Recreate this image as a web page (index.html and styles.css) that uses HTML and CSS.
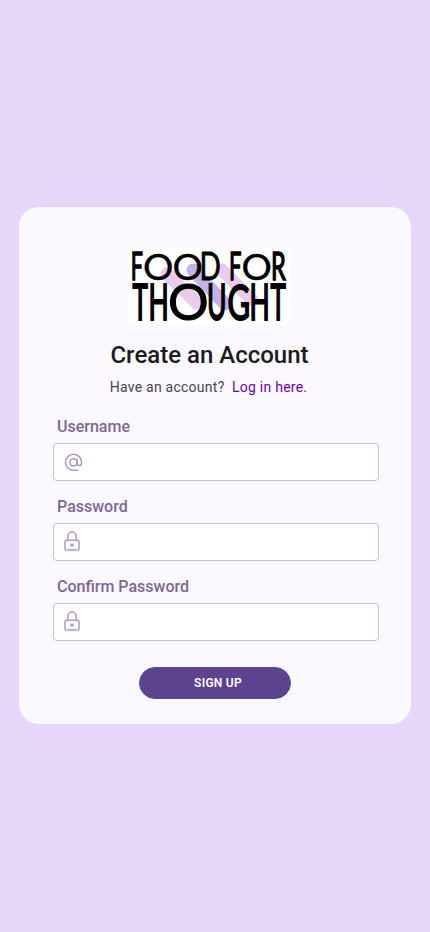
FILE: index.html
```html
<!DOCTYPE html>
<html lang="en">
<head>
<meta charset="utf-8">
<meta name="viewport" content="width=device-width, initial-scale=1">
<title>Create an Account</title>
<link rel="stylesheet" href="styles.css">
</head>
<body>
<main class="card">
  <svg class="logo" viewBox="0 0 162 77" role="img" aria-label="Food for Thought">
    <g class="band">
      <path class="pink" d="M39 26 69 55"/>
      <path class="pink" d="M94 22 124 52"/>
      <path class="violet" d="M65 22 97 56"/>
    </g>
    <g class="row-top">
      <text class="stem" transform="matrix(.215 0 0 .38 2.7 32.2)">F</text>
      <text class="ring" transform="matrix(.38 0 0 .374 14.9 32)">O</text>
      <text class="ring" transform="matrix(.38 0 0 .374 44.6 32)">O</text>
      <text class="heavy" transform="matrix(.28 0 0 .38 71.5 32.2)">D</text>
      <text class="stem" transform="matrix(.22 0 0 .38 101.1 32.2)">F</text>
      <text class="ring" transform="matrix(.38 0 0 .374 113.6 32)">O</text>
      <text class="stem" transform="matrix(.235 0 0 .38 143 32.2)">R</text>
    </g>
    <g class="row-bottom">
      <text class="stem" transform="matrix(.26 0 0 .5 4.5 71.7)">T</text>
      <text class="stem" transform="matrix(.265 0 0 .5 20.4 71.7)">H</text>
      <text class="heavy" transform="matrix(.508 0 0 .5 40 71.8)">O</text>
      <text class="stem" transform="matrix(.265 0 0 .5 79.1 71.5)">U</text>
      <text class="stem" transform="matrix(.31 0 0 .49 99.6 71.5)">G</text>
      <text class="stem" transform="matrix(.265 0 0 .5 121.4 71.7)">H</text>
      <text class="stem" transform="matrix(.26 0 0 .5 142.5 71.7)">T</text>
    </g>
  </svg>
  <h1 class="title">Create an Account</h1>
  <p class="switch">Have an account?&nbsp; <a class="link" href="#">Log in here.</a></p>
  <form class="form">
    <div class="field">
      <label class="label" for="username">Username</label>
      <div class="control">
        <svg class="icon" viewBox="0 0 20 20" aria-hidden="true">
          <circle cx="10.5" cy="10.3" r="3.6"/>
          <path d="M14.1 7.2v4.2a2.2 2.2 0 0 0 4.4 0v-1.1a8 8 0 1 0-8 8h4"/>
        </svg>
        <input class="input" id="username" type="text">
      </div>
    </div>
    <div class="field">
      <label class="label" for="password">Password</label>
      <div class="control">
        <svg class="icon lock" viewBox="0 0 20 20" aria-hidden="true">
          <rect x="2" y="9.2" width="14" height="9.8" rx="2"/>
          <path d="M4.9 9.2V5.1a4.1 4.1 0 0 1 8.2 0v4.1"/>
          <circle class="dot" cx="9" cy="14" r="1.8"/>
        </svg>
        <input class="input" id="password" type="password">
      </div>
    </div>
    <div class="field">
      <label class="label" for="confirm">Confirm Password</label>
      <div class="control">
        <svg class="icon lock" viewBox="0 0 20 20" aria-hidden="true">
          <rect x="2" y="9.2" width="14" height="9.8" rx="2"/>
          <path d="M4.9 9.2V5.1a4.1 4.1 0 0 1 8.2 0v4.1"/>
          <circle class="dot" cx="9" cy="14" r="1.8"/>
        </svg>
        <input class="input" id="confirm" type="password">
      </div>
    </div>
    <button class="submit" type="button">SIGN UP</button>
  </form>
</main>
</body>
</html>
```
FILE: styles.css
```css
* { box-sizing: border-box; }
body {
  margin: 0;
  min-height: 100vh;
  padding: 207px 19px 0;
  background: #e6d7fa;
  font-family: Roboto, sans-serif;
}
.card {
  display: flex;
  flex-direction: column;
  align-items: center;
  height: 517px;
  padding: 41px 32px 0 34px;
  border-radius: 20px;
  background: #fbf8ff;
}
.logo {
  display: block;
  width: 162px;
  height: 77px;
  margin-right: 14px;
  border-radius: 5px;
  background: #fff;
  overflow: visible;
}
.logo text {
  font: 400 100px Lato, sans-serif;
  fill: #000;
  stroke: #000;
  stroke-width: 0;
}
.logo .ring { stroke-width: 1px; }
.logo .heavy { stroke-width: 2px; }
.logo .stem { stroke-width: 4px; }
.band { fill: none; stroke-width: 13px; stroke-linecap: round; }
.pink { stroke: #ebcbea; }
.violet { stroke: #c3b1ea; }
.title {
  margin: 16px 0 0;
  padding-right: 13px;
  color: #1d1b20;
  font-size: 24px;
  font-weight: 500;
  line-height: 28px;
}
.switch {
  margin: 8px 0 18px;
  padding-right: 15px;
  color: #49454f;
  font-size: 14px;
  line-height: 20px;
  letter-spacing: .25px;
}
.link { color: #6a00c4; text-decoration: none; }
.form {
  display: flex;
  flex-direction: column;
  gap: 14px;
  width: 100%;
}
.label {
  display: block;
  margin-bottom: 4px;
  padding-left: 4px;
  color: #7d6797;
  font-size: 16px;
  font-weight: 500;
  line-height: 24px;
}
.control {
  display: flex;
  align-items: center;
  height: 38px;
  padding-left: 9px;
  border: 1px solid #c8c4cc;
  border-radius: 4px;
  background: #fff;
}
.icon {
  flex: none;
  width: 20px;
  height: 20px;
  fill: none;
  stroke: #ac98cc;
  stroke-width: 1.5px;
  stroke-linecap: round;
}
.lock { margin-bottom: 2px; }
.icon .dot { fill: #ac98cc; stroke: none; }
.input {
  flex: 1;
  min-width: 0;
  height: 100%;
  padding: 0 8px;
  border: 0;
  outline: 0;
  background: none;
  font: inherit;
}
.submit {
  align-self: center;
  width: 152.5px;
  height: 32px;
  margin: 12px 2px 0 0;
  padding: 0 0 0 6px;
  border: 1px solid #4650bc;
  border-radius: 16px;
  background: #5c428f;
  color: #fff;
  font: 600 12px Roboto, sans-serif;
  letter-spacing: .25px;
}
```
